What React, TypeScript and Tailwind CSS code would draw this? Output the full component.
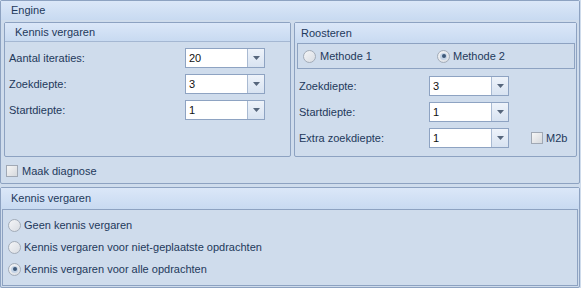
import React from "react";

const Arrow = () => (
  <svg width="7" height="4" viewBox="0 0 7 4">
    <path d="M0 0 H7 L3.5 4 Z" fill="#56667c" />
  </svg>
);

const Combo = ({ value }: { value: string }) => (
  <div className="flex h-[20px] w-[80px] border border-[#8ea3c2] bg-white">
    <div className="flex flex-1 items-center pl-[3px] text-[#111]">{value}</div>
    <div className="flex w-[17px] items-center justify-center border-l border-[#a9bad2] bg-gradient-to-b from-[#eef3fa] to-[#d8e3f1]">
      <Arrow />
    </div>
  </div>
);

const Radio = ({ checked }: { checked?: boolean }) => (
  <div className="flex h-[13px] w-[13px] shrink-0 items-center justify-center rounded-full border border-[#a3acb8] bg-gradient-to-br from-[#f4f5f7] to-[#d9dde3]">
    {checked && (
      <div className="flex h-[7px] w-[7px] items-center justify-center rounded-full bg-[#c3d3e6]">
        <div className="h-[4px] w-[4px] rounded-full bg-[#3d5878]" />
      </div>
    )}
  </div>
);

const Check = () => (
  <div className="h-[12px] w-[12px] shrink-0 border border-[#a0a8b4] bg-gradient-to-br from-[#f6f6f6] to-[#d6d9dd]" />
);

export default function App() {
  return (
    <div className="h-[288px] w-[581px] bg-[#cfdcec] font-['Liberation_Sans',sans-serif] text-[11px] leading-none text-[#1e395b]">
      {/* Engine panel */}
      <div className="flex h-[184px] w-[580px] flex-col rounded-[2px] border border-[#8da2c1] bg-[#cfdcec]">
        <div className="flex h-[19px] items-center bg-gradient-to-b from-[#dbe7f8] to-[#c8daf1] pl-[10px]">Engine</div>
        <div className="flex flex-col pl-[3px] pt-[2px]">
          <div className="flex gap-[3px]">
            {/* Left group */}
            <div className="flex h-[135px] w-[287px] flex-col rounded-[2px] border border-[#8da2c1]">
              <div className="flex h-[19px] items-center border-b border-[#a4b7d2] bg-gradient-to-b from-[#dbe7f8] to-[#c8daf1] pl-[10px]">
                Kennis vergaren
              </div>
              <div className="flex flex-col gap-[6px] pl-[4px] pt-[6px]">
                {[
                  ["Aantal iteraties:", "20"],
                  ["Zoekdiepte:", "3"],
                  ["Startdiepte:", "1"],
                ].map(([l, v]) => (
                  <div key={l} className="flex items-center">
                    <div className="w-[176px]">{l}</div>
                    <Combo value={v} />
                  </div>
                ))}
              </div>
            </div>
            {/* Right group */}
            <div className="flex h-[135px] w-[283px] flex-col rounded-[2px] border border-[#8da2c1]">
              <div className="flex h-[20px] items-center bg-gradient-to-b from-[#dbe7f8] to-[#c8daf1] pl-[6px]">
                Roosteren
              </div>
              <div className="ml-[2px] mr-[1px] flex h-[26px] items-center border border-[#8da2c1] pl-[5px]">
                <div className="flex w-[134px] items-center gap-[4px]">
                  <Radio />
                  <span>Methode 1</span>
                </div>
                <div className="flex items-center gap-[3px]">
                  <Radio checked />
                  <span>Methode 2</span>
                </div>
              </div>
              <div className="mt-[7px] flex flex-col gap-[6px] pl-[4px]">
                <div className="flex items-center">
                  <div className="w-[130px]">Zoekdiepte:</div>
                  <Combo value="3" />
                </div>
                <div className="flex items-center">
                  <div className="w-[130px]">Startdiepte:</div>
                  <Combo value="1" />
                </div>
                <div className="flex items-center">
                  <div className="w-[130px]">Extra zoekdiepte:</div>
                  <Combo value="1" />
                  <div className="ml-[22px] flex items-center gap-[3px]">
                    <Check />
                    <span>M2b</span>
                  </div>
                </div>
              </div>
            </div>
          </div>
          <div className="mt-[4px] flex h-[20px] items-center gap-[4px] pl-[2px]">
            <Check />
            <span>Maak diagnose</span>
          </div>
        </div>
      </div>
      {/* Bottom panel */}
      <div className="mt-[3px] flex h-[101px] w-[580px] flex-col rounded-[2px] border border-[#8da2c1]">
        <div className="flex h-[21px] items-center bg-gradient-to-b from-[#dbe7f8] to-[#c8daf1] pl-[10px]">
          Kennis vergaren
        </div>
        <div className="mx-[1px] mb-[1px] flex flex-1 flex-col border border-[#8da2c1] pl-[5px] pt-[4px]">
          {[
            ["Geen kennis vergaren", false],
            ["Kennis vergaren voor niet-geplaatste opdrachten", false],
            ["Kennis vergaren voor alle opdrachten", true],
          ].map(([t, c]) => (
            <div key={t as string} className="flex h-[22px] items-center gap-[3px]">
              <Radio checked={c as boolean} />
              <span>{t as string}</span>
            </div>
          ))}
        </div>
      </div>
    </div>
  );
}
